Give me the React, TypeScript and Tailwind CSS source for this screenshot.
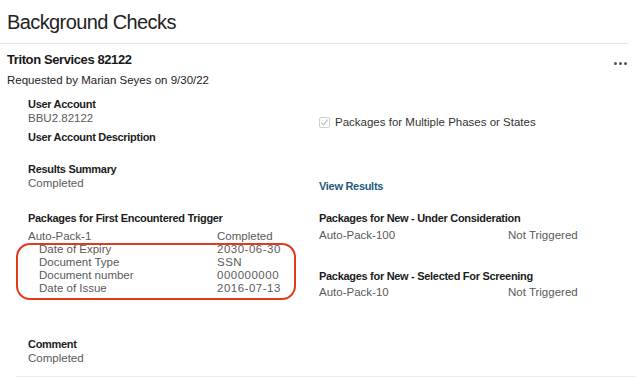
import React from "react";

const Label = ({ children }: { children: React.ReactNode }) => (
  <div className="text-[11px] leading-[14px] font-bold tracking-[-0.3px] text-[#1c1c1c]">{children}</div>
);
const Value = ({ children }: { children: React.ReactNode }) => (
  <div className="text-[11.5px] leading-[14px] text-[#5a5a5a]">{children}</div>
);

const Row = ({ a, b, indent, num }: { a: string; b: string; indent?: boolean; num?: boolean }) => (
  <div className="flex text-[11.5px] leading-[13px] text-[#5a5a5a]">
    <div className={indent ? "w-[189px] pl-[11px]" : "w-[189px]"}>{a}</div>
    <div className={num ? "tracking-[0.5px]" : ""}>{b}</div>
  </div>
);

export default function App() {
  return (
    <div
      className="w-[636px] h-[379px] bg-white overflow-hidden relative"
      style={{ fontFamily: "'Liberation Sans', Arial, sans-serif" }}
    >
      <div className="pt-[8px] pl-[7px] text-[20px] leading-[28px] tracking-[-0.6px] text-[#222]">
        Background Checks
      </div>
      <div className="mt-[7px] w-[628px] h-px bg-[#e3e3e3]" />
      <div className="flex items-center justify-between pl-[7px] pr-[9px] mt-[8px]">
        <div className="text-[13px] leading-[16px] font-bold tracking-[-0.4px] text-[#1a1a1a]">Triton Services 82122</div>
        <div className="flex gap-[2px] mt-[6px]">
          <span className="w-[3px] h-[3px] rounded-full bg-[#555]" />
          <span className="w-[3px] h-[3px] rounded-full bg-[#555]" />
          <span className="w-[3px] h-[3px] rounded-full bg-[#555]" />
        </div>
      </div>
      <div className="pl-[7px] mt-[5px] text-[11.5px] leading-[14px] text-[#222]">
        Requested by Marian Seyes on 9/30/22
      </div>

      <div className="flex pl-[28px] mt-[10px]">
        <div className="w-[291px] flex flex-col">
          <Label>User Account</Label>
          <Value>BBU2.82122</Value>
          <div className="mt-[5px]">
            <Label>User Account Description</Label>
          </div>
          <div className="mt-[18px]">
            <Label>Results Summary</Label>
            <Value>Completed</Value>
          </div>
          <div className="mt-[21px]">
            <Label>Packages for First Encountered Trigger</Label>
            <div className="mt-[5px]">
              <Row a="Auto-Pack-1" b="Completed" />
              <div className="relative">
                <Row a="Date of Expiry" b="2030-06-30" indent num />
                <Row a="Document Type" b="SSN" indent num />
                <Row a="Document number" b="000000000" indent num />
                <Row a="Date of Issue" b="2016-07-13" indent num />
                <div className="absolute left-[-12px] top-[0px] w-[280px] h-[57px] border-2 border-[#e2391f] rounded-[14px]" />
              </div>
            </div>
          </div>
          <div className="mt-[42px]">
            <Label>Comment</Label>
            <Value>Completed</Value>
          </div>
        </div>

        <div className="flex flex-col">
          <div className="flex items-center gap-[5px] mt-[18px]">
            <div className="w-[11px] h-[11px] border border-[#d0d0d0] rounded-[2px] flex items-center justify-center">
              <svg width="9" height="9" viewBox="0 0 10 10">
                <path d="M1.5 5.2 L4 7.6 L8.6 1.8" fill="none" stroke="#b8b8b8" strokeWidth="1.2" />
              </svg>
            </div>
            <div className="text-[11.5px] leading-[14px] text-[#333]">Packages for Multiple Phases or States</div>
          </div>
          <div className="mt-[50px] text-[11px] leading-[14px] font-bold tracking-[-0.3px] text-[#1f5a7c]">View Results</div>
          <div className="mt-[18px]">
            <Label>Packages for New - Under Consideration</Label>
            <div className="mt-[3px]">
              <div className="flex text-[11.5px] leading-[14px] text-[#5a5a5a]">
                <div className="w-[189px]">Auto-Pack-100</div>
                <div>Not Triggered</div>
              </div>
            </div>
          </div>
          <div className="mt-[27px]">
            <Label>Packages for New - Selected For Screening</Label>
            <div className="mt-[2px]">
              <div className="flex text-[11.5px] leading-[14px] text-[#5a5a5a]">
                <div className="w-[189px]">Auto-Pack-10</div>
                <div>Not Triggered</div>
              </div>
            </div>
          </div>
        </div>
      </div>
      <div className="absolute left-[16px] right-0 top-[376px] h-px bg-[#ececec]" />
    </div>
  );
}
